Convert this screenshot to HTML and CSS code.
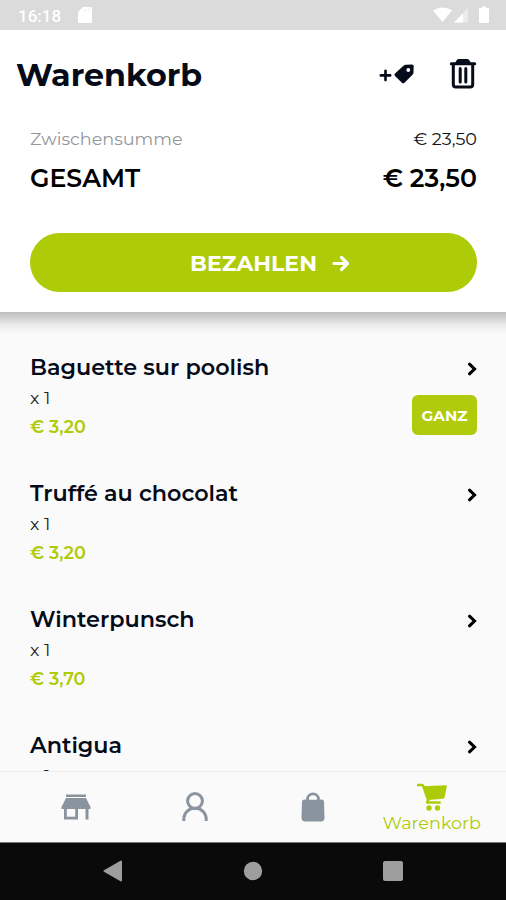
FILE: index.html
```html
<!DOCTYPE html>
<html lang="de">
<head>
  <meta charset="UTF-8" />
  <meta name="viewport" content="width=device-width, initial-scale=1.0" />
  <title>Warenkorb</title>
  <link rel="stylesheet" href="styles.css">
</head>
<body>
  <div class="statusbar">
    <span class="clock">16:18</span>
    <svg class="sdcard" width="14" height="16" viewBox="0 0 14 16"><path d="M5 0h7.500q1.500 0 1.500 1.500v13q0 1.500-1.500 1.500h-11q-1.500 0-1.500-1.500v-9.500z" fill="#fff"/><path d="M5.500 2v2.500M8 2v2.500M10.500 2v2.500" stroke="#eee"/></svg>
    <svg class="signals" width="58" height="18" viewBox="0 0 58 18">
      <path d="M1 4.500q9.500-6 19 0l-9.500 11.500z" fill="#fff"/>
      <path d="M36 2v14.500h-14z" fill="#ebebeb"/>
      <path d="M31 7.200v9.300h-9z" fill="#fff"/>
      <path d="M48 2h2v-1.500h4v1.500h2q1 0 1 1v13q0 1-1 1h-8q-1 0-1-1v-13q0-1 1-1z" fill="#fff"/>
    </svg>
  </div>

  <header class="summary">
    <div class="title-row">
      <h1>Warenkorb</h1>
      <svg class="tag-icon" width="36" height="22" viewBox="0 0 36 22">
        <path d="M6.500 6.700v9.400M1.800 11.400h9.400" stroke="#050b18" stroke-width="2.600" stroke-linecap="round"/>
        <path d="M24.500 1.700q1-1 2.500-1l6-.2q1.700 0 1.700 1.700l-.2 6q0 1.500-1 2.500l-8 8q-1.300 1.200-2.600 0l-6.900-6.700q-1.300-1.300 0-2.600z" fill="#050b18"/>
        <circle cx="29.300" cy="6" r="1.900" fill="#fff"/>
      </svg>
      <svg class="trash-icon" width="28" height="32" viewBox="0 0 28 32">
        <path d="M2.300 5.800h23.400M8 4.500l1.500-2h9l1.500 2" fill="none" stroke="#050b18" stroke-width="3" stroke-linecap="round" stroke-linejoin="round"/>
        <path d="M9 2h10v4h-10z" fill="#050b18"/>
        <path d="M4.300 6v20.500q0 2.500 2.500 2.500h14.400q2.500 0 2.500-2.500v-20.500" fill="none" stroke="#050b18" stroke-width="3"/>
        <path d="M11.200 10.500v13.500M16.800 10.500v13.500" stroke="#050b18" stroke-width="3" stroke-linecap="round"/>
      </svg>
    </div>
    <div class="sum-row subtotal"><span class="label">Zwischensumme</span><span>€ 23,50</span></div>
    <div class="sum-row total"><span>GESAMT</span><span>€ 23,50</span></div>
    <button class="pay"><span>BEZAHLEN</span>
      <svg width="18" height="18" viewBox="0 0 18 18"><path d="M2 8.500h13M9.500 2.500l6 6-6 6" fill="none" stroke="#fff" stroke-width="3.200" stroke-linecap="round" stroke-linejoin="round"/></svg>
    </button>
  </header>

  <main class="items">
    <div class="item">
      <div class="info"><h2>Baguette sur poolish</h2><p class="qty">x 1</p><p class="price">€ 3,20</p></div>
      <div class="side">
        <svg class="chevron" width="10" height="14" viewBox="0 0 10 14"><path d="M2.500 2.200l5 4.800-5 4.800" fill="none" stroke="#000" stroke-width="3.100" stroke-linecap="round"/></svg>
        <span class="badge">GANZ</span>
      </div>
    </div>
    <div class="item">
      <div class="info"><h2>Truffé au chocolat</h2><p class="qty">x 1</p><p class="price">€ 3,20</p></div>
      <div class="side">
        <svg class="chevron" width="10" height="14" viewBox="0 0 10 14"><path d="M2.500 2.200l5 4.800-5 4.800" fill="none" stroke="#000" stroke-width="3.100" stroke-linecap="round"/></svg>
      </div>
    </div>
    <div class="item">
      <div class="info"><h2>Winterpunsch</h2><p class="qty">x 1</p><p class="price">€ 3,70</p></div>
      <div class="side">
        <svg class="chevron" width="10" height="14" viewBox="0 0 10 14"><path d="M2.500 2.200l5 4.800-5 4.800" fill="none" stroke="#000" stroke-width="3.100" stroke-linecap="round"/></svg>
      </div>
    </div>
    <div class="item">
      <div class="info"><h2>Antigua</h2><p class="qty">x 1</p></div>
      <div class="side">
        <svg class="chevron" width="10" height="14" viewBox="0 0 10 14"><path d="M2.500 2.200l5 4.800-5 4.800" fill="none" stroke="#000" stroke-width="3.100" stroke-linecap="round"/></svg>
      </div>
    </div>
  </main>

  <nav class="tabs">
    <div class="tab">
      <svg width="30" height="26" viewBox="0 0 30 26" fill="#89949e"><path d="M5 .5h20v2.500h-20zM5 4h20l4.500 9v2h-29v-2zM3 14h14v11.500h-14zM24.500 14h3v11.500h-3z"/><path d="M5.800 15h8.400v7.700h-8.400z" fill="#fafafa"/></svg>
    </div>
    <div class="tab">
      <svg width="28" height="30" viewBox="0 0 28 30" fill="none" stroke="#89949e" stroke-width="3"><circle cx="14" cy="9" r="7.400"/><path d="M2.800 29v-1.500c0-15 22.400-15 22.400 0v1.500"/></svg>
    </div>
    <div class="tab">
      <svg width="24" height="30" viewBox="0 0 24 30"><path d="M6.500 11v-3.500c0-7.500 11-7.500 11 0v3.500" fill="none" stroke="#89949e" stroke-width="2.800"/><path d="M3.500 7.500h17q2.300 0 2.500 2l.5 16q0 4-3.700 4h-15.600q-3.700 0-3.700-4l.5-16q.2-2 2.500-2z" fill="#89949e"/><path d="M8 7.500c0-5 8-5 8 0z" fill="#fafafa"/></svg>
    </div>
    <div class="tab active">
      <svg width="30" height="28" viewBox="0 0 30 28"><path d="M0 2h4.500q1.500 0 2 1.500l4.700 13.500-1 2.500h13.500" fill="none" stroke="#aecb08" stroke-width="2.700" stroke-linejoin="round"/><path d="M6 3.300l23-1q1 0 .8 1l-2 10.500q-.2 1.700-1.800 1.900l-14.500 1.300z" fill="#aecb08"/><circle cx="12" cy="25" r="2.700" fill="#aecb08"/><circle cx="20.500" cy="25" r="2.700" fill="#aecb08"/></svg>
      <span>Warenkorb</span>
    </div>
  </nav>

  <footer class="sysnav">
    <svg width="20" height="22" viewBox="0 0 20 22"><path d="M18 1.500v19l-16.500-9.500z" fill="#9e9e9e" stroke="#9e9e9e" stroke-width="2" stroke-linejoin="round"/></svg>
    <svg width="20" height="20" viewBox="0 0 20 20"><circle cx="10" cy="10" r="9.200" fill="#9e9e9e"/></svg>
    <svg width="20" height="20" viewBox="0 0 20 20"><rect width="20" height="20" rx="2" fill="#9e9e9e"/></svg>
  </footer>
</body>
</html>
```

FILE: styles.css
```css
* { box-sizing: border-box; }
body { margin: 0; height: 900px; display: flex; flex-direction: column; overflow: hidden; font-family: Montserrat, Inter, sans-serif; background: #fafafa; color: #050b18; white-space: nowrap; }
h1, h2, p { margin: 0; }
svg { display: block; flex: none; }

.statusbar { height: 30px; flex: none; display: flex; align-items: center; padding: 0 16px 0 18px; background: #dbdbdb; color: #fff; font: 500 17px/30px Roboto, sans-serif; }
.clock { width: 60px; padding-top: 1px; }
.signals { margin-left: auto; }

.summary { height: 282px; flex: none; padding: 0 29px 0 30px; background: #fff; }
.title-row { display: flex; align-items: center; height: 90px; margin-left: -14px; }
h1 { flex: 1; font-size: 31.700px; line-height: 40px; font-weight: 700; }
.tag-icon { margin-right: 34px; }
.trash-icon { margin: -3px 0 0 0; }
.sum-row { display: flex; justify-content: space-between; color: #111; }
.subtotal { font-size: 17.600px; line-height: 38px; }
.subtotal .label { color: #92979b; }
.total { font-size: 25.200px; line-height: 41px; font-weight: 600; color: #000; }
.pay { display: flex; align-items: center; justify-content: center; gap: 15px; width: 447px; height: 59px; margin-top: 34px; padding: 2px 0 0 33px; border: none; border-radius: 30px; background: #aecb08; color: #fff; font: 700 22px/30px Montserrat, Inter, sans-serif; }

.items { flex: 1; min-height: 0; overflow: hidden; padding: 39px 29px 0 30px; background: linear-gradient(#bebebe, #d2d2d2 6px, #ebebeb 13px, #fafafa 22px); }
.item { display: flex; justify-content: space-between; height: 126px; }
h2 { font-size: 22.300px; line-height: 32px; font-weight: 600; }
.qty { font-size: 17.500px; line-height: 30px; color: #222; }
.price { font-size: 17.600px; line-height: 28px; font-weight: 600; color: #aecb08; }
.side { display: flex; flex-direction: column; align-items: flex-end; padding-top: 11px; }
.badge { width: 65px; height: 40px; margin-top: 19px; border-radius: 6px; background: #b0cb0c; color: #fff; font-size: 15.200px; line-height: 42px; font-weight: 700; text-align: center; }

.tabs { height: 71px; flex: none; display: flex; padding: 0 15px 0 17px; background: #fafafa; border-top: 1px solid #eee; }
.tab { width: 118.500px; display: flex; flex-direction: column; align-items: center; justify-content: center; }
.active { padding-top: 3px; color: #aecb08; font-size: 17.600px; line-height: 24px; }
.sysnav { height: 58px; flex: none; display: flex; align-items: center; justify-content: space-between; padding: 0 103px 1px; background: #0a0a0a; border-top: 1px solid #777; }
```
